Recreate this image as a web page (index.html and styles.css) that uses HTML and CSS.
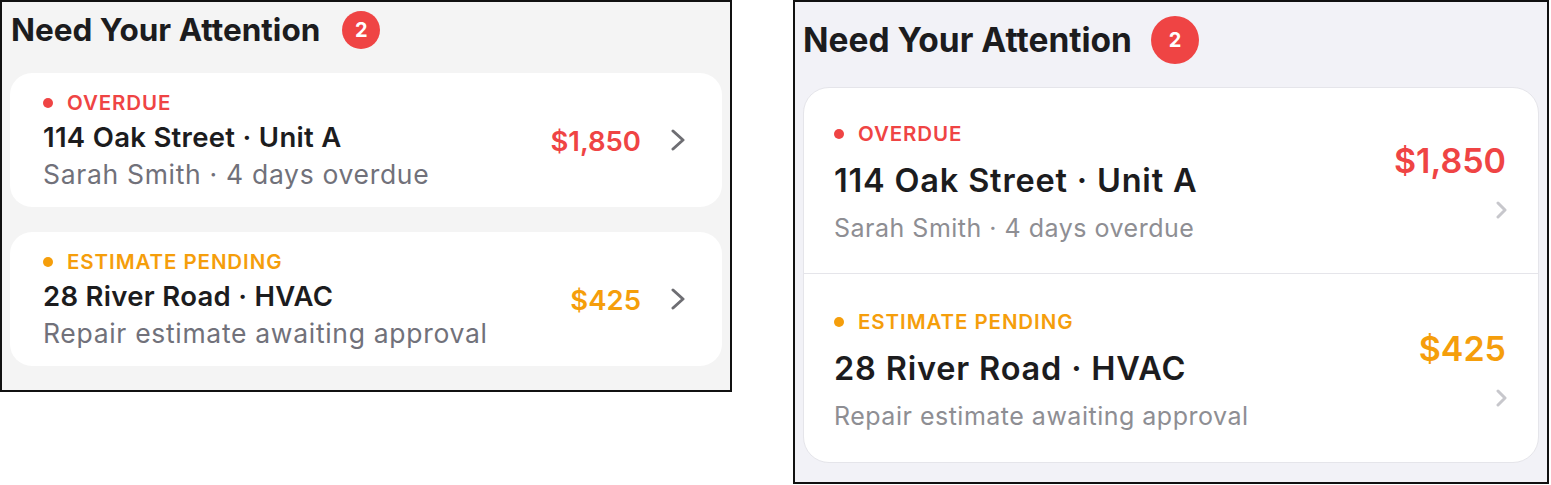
FILE: index.html
```html
<!DOCTYPE html>
<html lang="en">
<head>
  <meta charset="UTF-8" />
  <meta name="viewport" content="width=device-width, initial-scale=1.0" />
  <title>Need Your Attention</title>
  <link rel="stylesheet" href="styles.css">
</head>
<body>
  <!-- version A: separate cards -->
  <section class="panel cards">
    <header class="panel-head">
      <h2>Need Your Attention</h2>
      <span class="count">2</span>
    </header>

    <div class="card">
      <div class="info">
        <div class="status overdue">OVERDUE</div>
        <div class="title">114 Oak Street · Unit A</div>
        <div class="sub">Sarah Smith · 4 days overdue</div>
      </div>
      <div class="amount overdue">$1,850</div>
      <svg class="chev" width="14" height="22" viewBox="0 0 14 22"><polyline points="2,2 12,11 2,20" /></svg>
    </div>

    <div class="card">
      <div class="info">
        <div class="status pending">ESTIMATE PENDING</div>
        <div class="title">28 River Road · HVAC</div>
        <div class="sub">Repair estimate awaiting approval</div>
      </div>
      <div class="amount pending">$425</div>
      <svg class="chev" width="14" height="22" viewBox="0 0 14 22"><polyline points="2,2 12,11 2,20" /></svg>
    </div>
  </section>

  <!-- version B: grouped list -->
  <section class="panel grouped">
    <header class="panel-head">
      <h2>Need Your Attention</h2>
      <span class="count">2</span>
    </header>

    <div class="group">
      <div class="row">
        <div class="info">
          <div class="status overdue">OVERDUE</div>
          <div class="title">114 Oak Street · Unit A</div>
          <div class="sub">Sarah Smith · 4 days overdue</div>
        </div>
        <div class="side">
          <div class="amount overdue">$1,850</div>
          <svg class="chev" width="11" height="18" viewBox="0 0 11 18"><polyline points="2,2 9,9 2,16" /></svg>
        </div>
      </div>
      <div class="row">
        <div class="info">
          <div class="status pending">ESTIMATE PENDING</div>
          <div class="title">28 River Road · HVAC</div>
          <div class="sub">Repair estimate awaiting approval</div>
        </div>
        <div class="side">
          <div class="amount pending">$425</div>
          <svg class="chev" width="11" height="18" viewBox="0 0 11 18"><polyline points="2,2 9,9 2,16" /></svg>
        </div>
      </div>
    </div>
  </section>
</body>
</html>
```

FILE: styles.css
```css
body {
  margin: 0;
  background: #fff;
  font-family: Inter, 'Noto Sans', sans-serif;
  color: #1c1c1e;
  display: flex;
  align-items: flex-start;
  gap: 61px;
}
.panel {
  box-sizing: border-box;
  border: 2px solid #111;
}
.panel-head {
  display: flex;
  align-items: center;
}
.panel-head h2 {
  margin: 0;
  font-weight: 700;
}
.count {
  display: flex;
  align-items: center;
  justify-content: center;
  flex-shrink: 0;
  border-radius: 50%;
  background: #ef4444;
  color: #fff;
  font-size: 20px;
  font-weight: 700;
}
.status {
  display: flex;
  align-items: center;
  gap: 14px;
  font-size: 20.5px;
  line-height: 28px;
  font-weight: 600;
  letter-spacing: 0.045em;
}
.status::before {
  content: "";
  width: 10px;
  height: 10px;
  border-radius: 50%;
  background: currentColor;
}
.overdue { color: #ef4444; }
.pending { color: #f59e0b; }
.title { font-weight: 600; }
.amount { font-weight: 600; }
.chev polyline {
  fill: none;
  stroke-linecap: round;
  stroke-linejoin: round;
}

/* left: cards */
.cards {
  width: 732px;
  height: 392px;
  padding: 10px 8px;
  background: #f4f4f4;
}
.cards .panel-head {
  height: 36px;
  gap: 22px;
}
.cards .panel-head h2 {
  font-size: 31.5px;
  line-height: 36px;
  padding-left: 1px;
}
.cards .count {
  width: 38px;
  height: 38px;
}
.card {
  display: flex;
  align-items: center;
  margin-top: 25px;
  padding: 16px 37px 16px 33px;
  background: #fff;
  border-radius: 22px;
}
.card .info { flex: 1; }
.card .title {
  font-size: 27.5px;
  line-height: 40px;
  letter-spacing: 0.3px;
}
.card .sub {
  font-size: 26.5px;
  line-height: 34px;
  letter-spacing: 0.026em;
  color: #71717a;
}
.card .amount {
  font-size: 27.5px;
  margin: 1px 30px 0 0;
}
.card .chev polyline {
  stroke: #6e6e73;
  stroke-width: 3;
}

/* right: grouped list */
.grouped {
  width: 756px;
  height: 484px;
  padding: 14px 8px 20px;
  background: #f2f2f7;
}
.grouped .panel-head { gap: 19px; }
.grouped .panel-head h2 {
  font-size: 33.5px;
  line-height: 48px;
}
.grouped .count {
  width: 48px;
  height: 48px;
}
.group {
  margin-top: 23px;
  background: #fff;
  border: 1px solid #e5e5ea;
  border-radius: 26px;
  overflow: hidden;
}
.row {
  display: flex;
  align-items: center;
  padding: 32px 32px 29px 30px;
}
.row + .row {
  border-top: 1px solid #e5e5ea;
  padding-top: 34px;
  padding-bottom: 30px;
}
.row .info { flex: 1; }
.row .title {
  margin-top: 13px;
  font-size: 32.5px;
  line-height: 40px;
  letter-spacing: 0.025em;
}
.row .sub {
  margin-top: 11px;
  font-size: 25px;
  line-height: 32px;
  letter-spacing: 0.02em;
  color: #8e8e93;
}
.side {
  display: flex;
  flex-direction: column;
  align-items: flex-end;
  gap: 20px;
  margin-bottom: 5px;
}
.row .amount {
  font-size: 34px;
  line-height: 40px;
}
.row .chev {
  margin-right: -1px;
}
.row .chev polyline {
  stroke: #c7c7cc;
  stroke-width: 3;
}
```
